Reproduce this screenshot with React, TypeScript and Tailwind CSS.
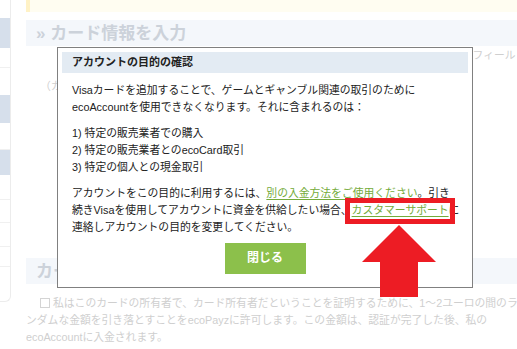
import React from 'react';

const font = "font-['Liberation_Sans','Noto_Sans_CJK_JP',sans-serif]";

function Sidebar() {
  return (
    <div className="w-[11px] h-[302px] shrink-0 border-r border-b border-[#ececec] rounded-br-[6px] flex flex-col">
      <div className="h-[18px]" />
      <div className="h-[30px] bg-[#d6dfeb]" />
      <div className="h-[20px] border-b border-[#f0f0f0]" />
      <div className="h-[27px]" />
      <div className="h-[28px] bg-[#d6dfeb]" />
      <div className="h-[27px] border-b border-[#f0f0f0]" />
      <div className="h-[25px] bg-[#d6dfeb]" />
      <div className="h-[25px] border-b border-[#f0f0f0]" />
      <div className="h-[23px] border-b border-[#f0f0f0]" />
      <div className="h-[24px] border-b border-[#f0f0f0]" />
      <div className="h-[20px] border-b border-[#f0f0f0]" />
    </div>
  );
}

function Background() {
  return (
    <div className="flex h-full">
      <Sidebar />
      <div className="ml-[15px] flex-1 flex flex-col text-[10.8px] leading-[17px] text-[#cfcfcf] overflow-hidden">
        <div className="h-[12px] shrink-0 bg-[#fffdf1] border-l-4 border-[#fff2c6]" />
        <div className="mt-[8px] h-[26px] shrink-0 bg-[#f4f7fb] pl-[10px] flex items-center text-[17px] font-bold text-[#ccd2da]">
          » カード情報を入力
        </div>
        <div className="mt-[2px] h-[14px] leading-[14px] pl-[425px] whitespace-nowrap">必須フィールド</div>
        <div className="mt-[16px] pl-[14px] whitespace-nowrap">（カード名義人）</div>
        <div className="mt-[163px] h-[26px] shrink-0 bg-[#f4f7fb] pl-[10px] flex items-center text-[17px] font-bold text-[#ccd2da]">
          カード認証
        </div>
        <p className="mt-[11px] whitespace-nowrap">
          <span className="ml-[14px] mr-[3px] inline-block w-[10px] h-[10px] border border-[#d4d4d4] align-[-1px]" />
          私はこのカードの所有者で、カード所有者だということを証明するために、1～2ユーロの間のラ
          <br />
          ンダムな金額を引き落とすことをecoPayzに許可します。この金額は、認証が完了した後、私の
          <br />
          ecoAccountに入金されます。
        </p>
      </div>
    </div>
  );
}

function Modal() {
  const link = 'text-[#74ab3a] underline underline-offset-[2px]';
  return (
    <div className="absolute left-[57px] top-[47px] w-[416px] h-[241px] border border-[#808080] bg-white p-[4px] flex flex-col text-[10.8px] leading-[17px] text-[#222]">
      <div className="h-[21px] shrink-0 bg-[#e3ebf3] pl-[10px] flex items-center font-bold text-[11px]">
        アカウントの目的の確認
      </div>
      <div className="px-[10px] mt-[9px] flex flex-col gap-[9px] whitespace-nowrap">
        <p>
          Visaカードを追加することで、ゲームとギャンブル関連の取引のために
          <br />
          ecoAccountを使用できなくなります。それに含まれるのは：
        </p>
        <p>
          1) 特定の販売業者での購入
          <br />
          2) 特定の販売業者とのecoCard取引
          <br />
          3) 特定の個人との現金取引
        </p>
        <p>
          アカウントをこの目的に利用するには、<span className={link}>別の入金方法をご使用ください</span>。引き
          <br />
          続きVisaを使用してアカウントに資金を供給したい場合、<span className={link}>カスタマーサポート</span>に
          <br />
          連絡しアカウントの目的を変更してください。
        </p>
      </div>
      <div className="mt-[7px] flex justify-center">
        <button className="w-[81px] h-[31px] bg-[#8cc04b] text-white font-bold text-[12px]">閉じる</button>
      </div>
    </div>
  );
}

export default function App() {
  return (
    <div className={`relative w-[517px] h-[349px] overflow-hidden bg-white ${font}`}>
      <Background />
      <Modal />
      <div className="absolute left-[345px] top-[198px] w-[110px] h-[26px] border-[5px] border-[#ed1c24]" />
      <svg className="absolute left-[360px] top-[224px]" width="80" height="75" viewBox="360 224 80 75">
        <polygon points="399,225 436,262 418,262 418,297 380,297 380,262 362,262" fill="#ed1c24" />
      </svg>
    </div>
  );
}
